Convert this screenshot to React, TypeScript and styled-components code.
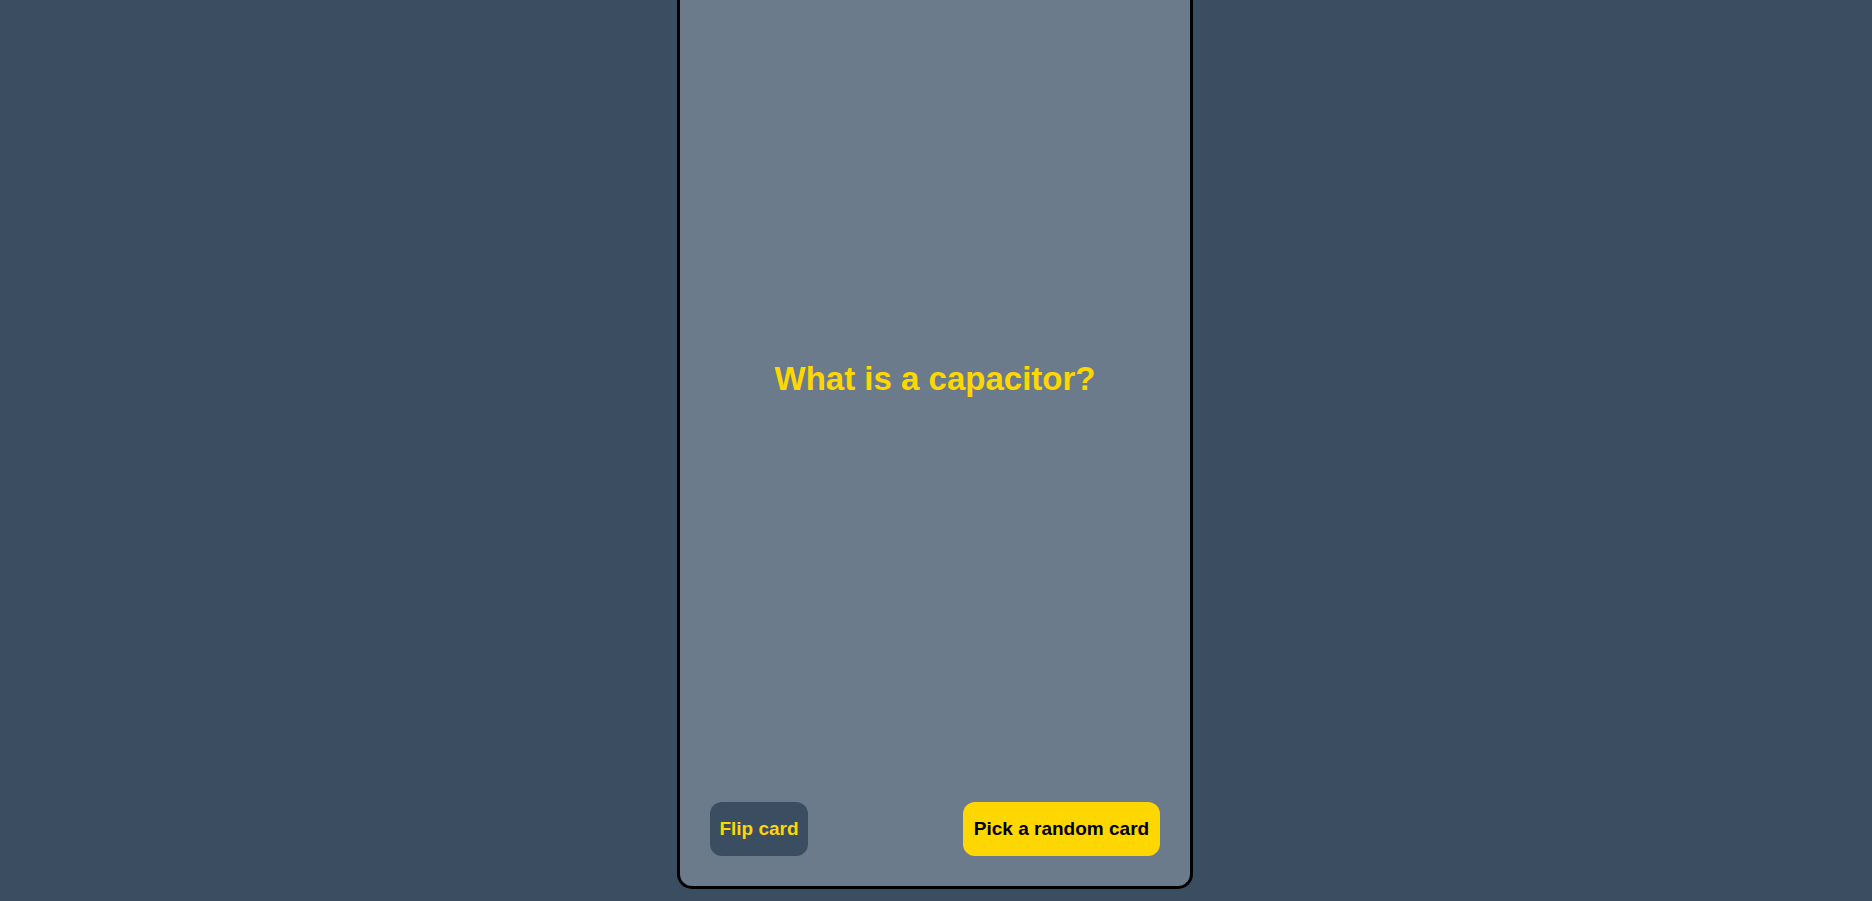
import React, { useState } from "react";
import styled, { createGlobalStyle } from "styled-components";

const GlobalStyle = createGlobalStyle`
  *, *::before, *::after { box-sizing: border-box; }
  body {
    margin: 0;
    background: #3b4d61;
    font-family: "Franklin Gothic Medium", "Liberation Sans", Arial, sans-serif;
  }
`;

const Page = styled.main`
  display: flex;
  justify-content: center;
  min-height: 100vh;
  padding: 0 14px 12px 12px;
`;

const Card = styled.section`
  display: flex;
  flex-direction: column;
  width: 100%;
  max-width: 516px;
  padding: 0 30px 30px;
  border: 3px solid #000;
  border-top: 0;
  border-radius: 0 0 15px 15px;
  background: #6b7b8c;
`;

const Face = styled.div`
  display: flex;
  flex: 1;
  align-items: center;
  justify-content: center;
  padding-bottom: 44px;
`;

const Prompt = styled.h1`
  margin: 0;
  color: #ffd700;
  font-size: 33px;
  line-height: 40px;
  text-align: center;
`;

const Actions = styled.div`
  display: flex;
  justify-content: space-between;
  gap: 16px;
`;

const ActionButton = styled.button<{ $primary?: boolean }>`
  min-width: ${({ $primary }) => ($primary ? "197px" : "98px")};
  height: 54px;
  padding: 0 9px;
  border: 0;
  border-radius: 12px;
  background: ${({ $primary }) => ($primary ? "#ffd700" : "#3b4d61")};
  color: ${({ $primary }) => ($primary ? "#000" : "#ffd700")};
  font-family: inherit;
  font-size: 19px;
  font-weight: 700;
  white-space: nowrap;
  cursor: pointer;
`;

const cards = [
  { question: "What is a capacitor?", answer: "A component that stores electric charge" },
  { question: "What is a resistor?", answer: "A component that limits current" },
];

export default function App() {
  const [index, setIndex] = useState(0);
  const [flipped, setFlipped] = useState(false);

  const pickRandom = () => {
    setIndex(Math.floor(Math.random() * cards.length));
    setFlipped(false);
  };

  return (
    <>
      <GlobalStyle />
      <Page>
        <Card>
          <Face>
            <Prompt>{flipped ? cards[index].answer : cards[index].question}</Prompt>
          </Face>
          <Actions>
            <ActionButton type="button" onClick={() => setFlipped(!flipped)}>
              Flip card
            </ActionButton>
            <ActionButton type="button" $primary onClick={pickRandom}>
              Pick a random card
            </ActionButton>
          </Actions>
        </Card>
      </Page>
    </>
  );
}
